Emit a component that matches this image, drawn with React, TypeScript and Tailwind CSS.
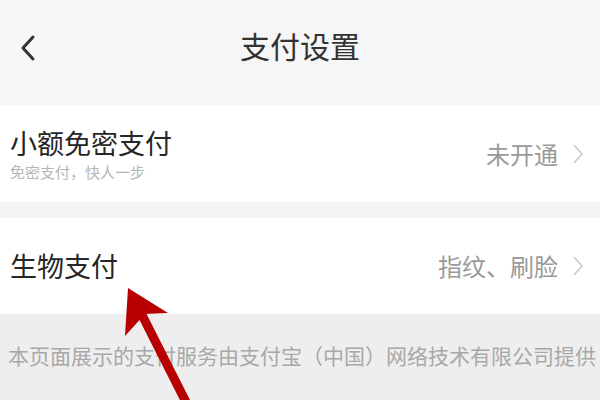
const cjk = { fontFamily: '"Noto Sans CJK SC", "Noto Sans", sans-serif' };

function Chevron() {
  return (
    <svg width="12" height="20" viewBox="0 0 12 20" className="ml-[14px]">
      <path d="M2 1 L10 10 L2 19" fill="none" stroke="#c8c8c8" strokeWidth="1.6" />
    </svg>
  );
}

function Row({ title, sub, value, h }: { title: string; sub?: string; value: string; h: string }) {
  return (
    <div className={`bg-white flex items-center justify-between pl-[10px] pr-[16px] ${h}`}>
      <div className="flex flex-col">
        <span className="text-[27px] leading-[34px] text-[#262626]">{title}</span>
        {sub && <span className="text-[15px] leading-[20px] text-[#b5b5b5] mt-[2px]">{sub}</span>}
      </div>
      <div className="flex items-center">
        <span className="text-[24px] text-[#9a9a9a]">{value}</span>
        <Chevron />
      </div>
    </div>
  );
}

export default function App() {
  return (
    <div className="relative w-[600px] h-[400px] overflow-hidden bg-[#eeeeee]" style={cjk}>
      {/* header */}
      <div className="bg-[#f6f6f6] h-[105px] relative flex items-start justify-center pt-[24px]">
        <svg className="absolute left-[18px] top-[34px]" width="20" height="28" viewBox="0 0 20 28">
          <path d="M15 3 L5 14 L15 25" fill="none" stroke="#333" strokeWidth="3" strokeLinecap="round" strokeLinejoin="round" />
        </svg>
        <span className="text-[30px] leading-[42px] text-[#333]">支付设置</span>
      </div>

      <Row title="小额免密支付" sub="免密支付，快人一步" value="未开通" h="h-[97px]" />
      <div className="h-[16px] bg-[#f3f3f3]" />
      <Row title="生物支付" value="指纹、刷脸" h="h-[96px]" />

      <div className="pt-[26px] px-[8px]">
        <p className="text-[21px] leading-[30px] text-[#a8a8a8] whitespace-nowrap">
          本页面展示的支付服务由支付宝（中国）网络技术有限公司提供
        </p>
      </div>

      {/* red annotation arrow */}
      <svg className="absolute left-0 top-0" width="600" height="400" viewBox="0 0 600 400">
        <line x1="190" y1="410" x2="137" y2="305" stroke="#b80000" strokeWidth="9" />
        <polygon points="128,288 125,336 145,314 168,313" fill="#b80000" />
      </svg>
    </div>
  );
}
